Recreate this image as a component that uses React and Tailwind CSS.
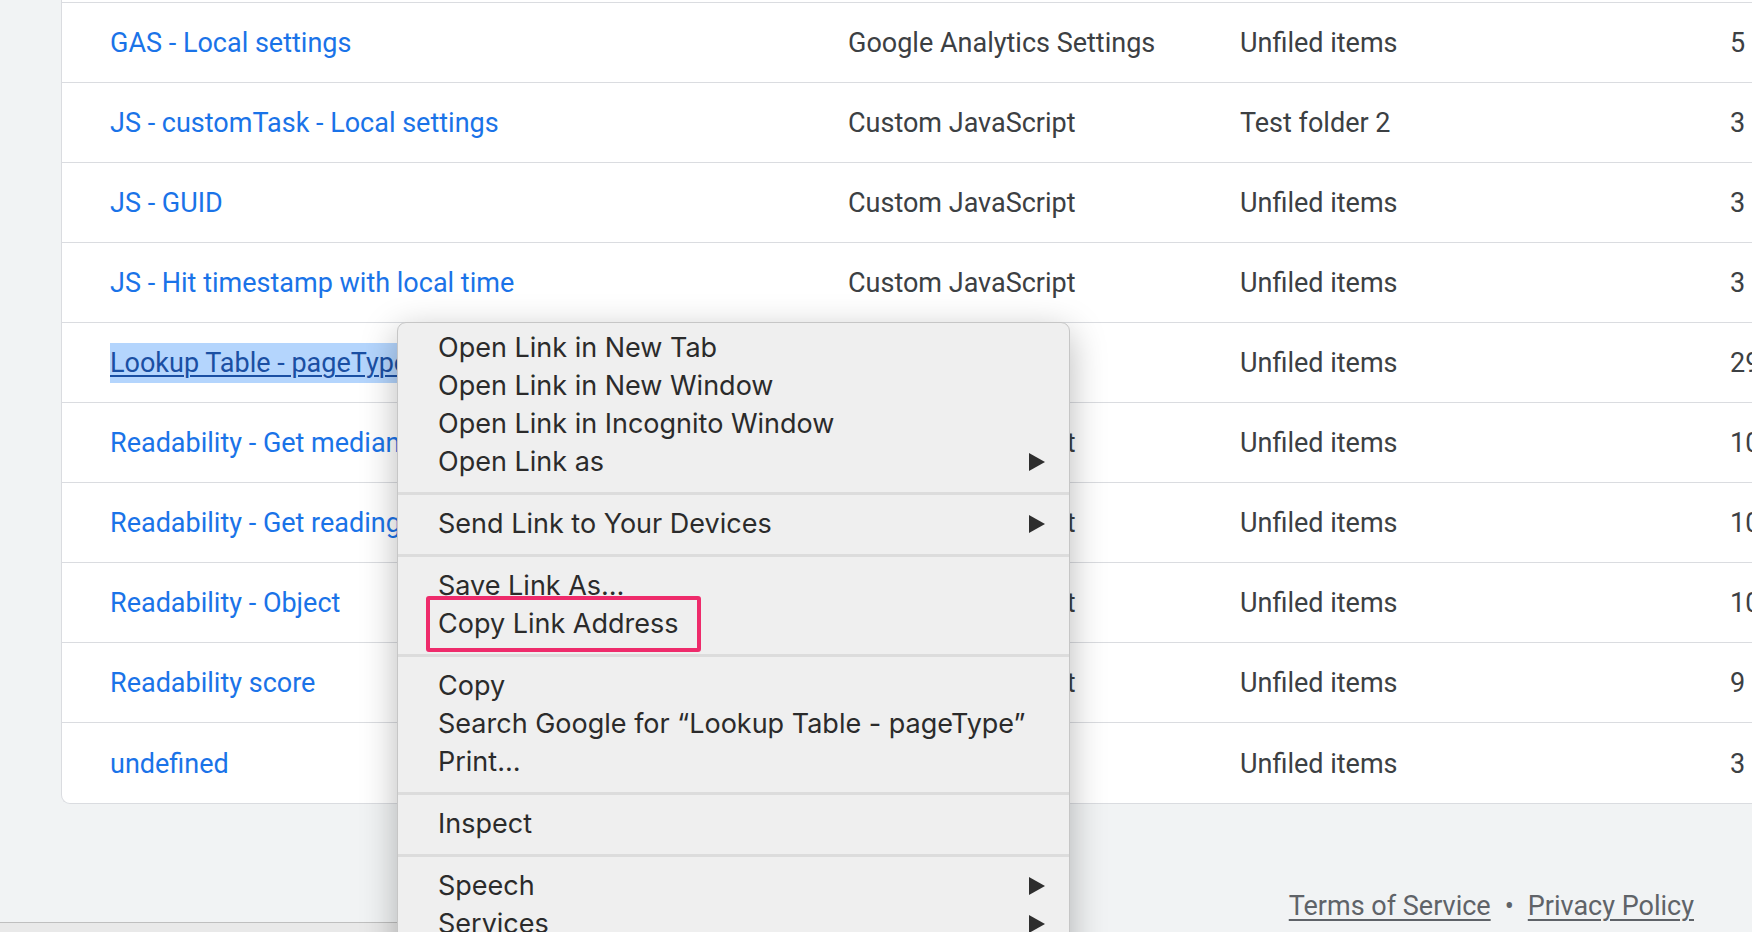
import React from "react";

const ROWS = [
  { name: "GAS - Local settings", type: "Google Analytics Settings", folder: "Unfiled items", count: "5" },
  { name: "JS - customTask - Local settings", type: "Custom JavaScript", folder: "Test folder 2", count: "3" },
  { name: "JS - GUID", type: "Custom JavaScript", folder: "Unfiled items", count: "3" },
  { name: "JS - Hit timestamp with local time", type: "Custom JavaScript", folder: "Unfiled items", count: "3" },
  { name: "Lookup Table - pageType", type: "Lookup Table", folder: "Unfiled items", count: "29", selected: true },
  { name: "Readability - Get median reading speed", type: "Custom JavaScript", folder: "Unfiled items", count: "10" },
  { name: "Readability - Get reading time", type: "Custom JavaScript", folder: "Unfiled items", count: "10" },
  { name: "Readability - Object", type: "Custom JavaScript", folder: "Unfiled items", count: "10" },
  { name: "Readability score", type: "Custom JavaScript", folder: "Unfiled items", count: "9" },
  { name: "undefined", type: "Constant", folder: "Unfiled items", count: "3" },
];

const MENU = [
  [
    { label: "Open Link in New Tab" },
    { label: "Open Link in New Window" },
    { label: "Open Link in Incognito Window" },
    { label: "Open Link as", sub: true },
  ],
  [{ label: "Send Link to Your Devices", sub: true }],
  [{ label: "Save Link As…" }, { label: "Copy Link Address", marked: true }],
  [{ label: "Copy" }, { label: "Search Google for “Lookup Table - pageType”" }, { label: "Print…" }],
  [{ label: "Inspect" }],
  [
    { label: "Speech", sub: true },
    { label: "Services", sub: true },
  ],
];

function Arrow() {
  return (
    <svg width="18" height="20" viewBox="0 0 18 20" className="shrink-0">
      <polygon points="1,1 17,10 1,19" fill="#2e2e2e" />
    </svg>
  );
}

function ContextMenu() {
  return (
    <div
      className="absolute left-[397px] top-[322px] w-[673px] h-[700px] rounded-[9px] border border-[#c6c6c6] bg-[#efefef] pt-[6px] shadow-[0_10px_36px_rgba(0,0,0,0.28)] text-[#2b2b2b]"
      style={{ fontFamily: "Inter, 'Noto Sans', sans-serif" }}
    >
      {MENU.map((group, gi) => (
        <div key={gi}>
          {gi > 0 && <div className="mt-[11px] mb-[10px] h-[3px] bg-[#dcdcdc]" />}
          {group.map((item) => (
            <div key={item.label} className="relative flex h-[38px] items-center justify-between pl-[40px] pr-[23px] text-[27px]">
              <span>{item.label}</span>
              {item.sub && <Arrow />}
              {item.marked && (
                <div className="absolute -top-[9px] -bottom-[9px] left-[28px] w-[275px] rounded-[3px] border-[4px] border-[#ee2b6b]" />
              )}
            </div>
          ))}
        </div>
      ))}
    </div>
  );
}

export default function App() {
  return (
    <div
      className="relative h-[932px] w-[1752px] overflow-hidden bg-[#f1f3f4]"
      style={{ fontFamily: "Roboto, 'Liberation Sans', sans-serif" }}
    >
      <div className="ml-[61px] w-[1740px] rounded-bl-[9px] border-l border-b border-[#dadce0] bg-white">
        <div className="h-[2px]" />
        <div className="border-t border-[#dadce0]" />
        {ROWS.map((r, i) => (
          <div
            key={r.name}
            className={`grid h-[80px] grid-cols-[738px_392px_490px_1fr] items-center pl-[48px] pt-[2px] text-[27px] ${i < ROWS.length - 1 ? "border-b border-[#dadce0]" : ""}`}
          >
            <div className="whitespace-nowrap">
              {r.selected ? (
                <span className="bg-[#b4d5fd] py-[4px] text-[#1a4fa3] underline decoration-[2px] underline-offset-[3px]">{r.name}</span>
              ) : (
                <span className="text-[#1a73e8]">{r.name}</span>
              )}
            </div>
            <div className="whitespace-nowrap text-[#3c4043]">{r.type}</div>
            <div className="whitespace-nowrap text-[#3c4043]">{r.folder}</div>
            <div className="whitespace-nowrap text-[#3c4043]">{r.count}</div>
          </div>
        ))}
      </div>

      <div className="mt-[86px] flex justify-end pr-[58px] text-[27px] leading-[32px] text-[#5f6368]">
        <span className="underline underline-offset-[4px]">Terms of Service</span>
        <span className="mx-[14px]">•</span>
        <span className="underline underline-offset-[4px]">Privacy Policy</span>
      </div>

      <div className="absolute bottom-0 left-0 h-[10px] w-[560px] border-t border-[#bfbfbf] bg-[#e9e9e9]" />

      <ContextMenu />
    </div>
  );
}
